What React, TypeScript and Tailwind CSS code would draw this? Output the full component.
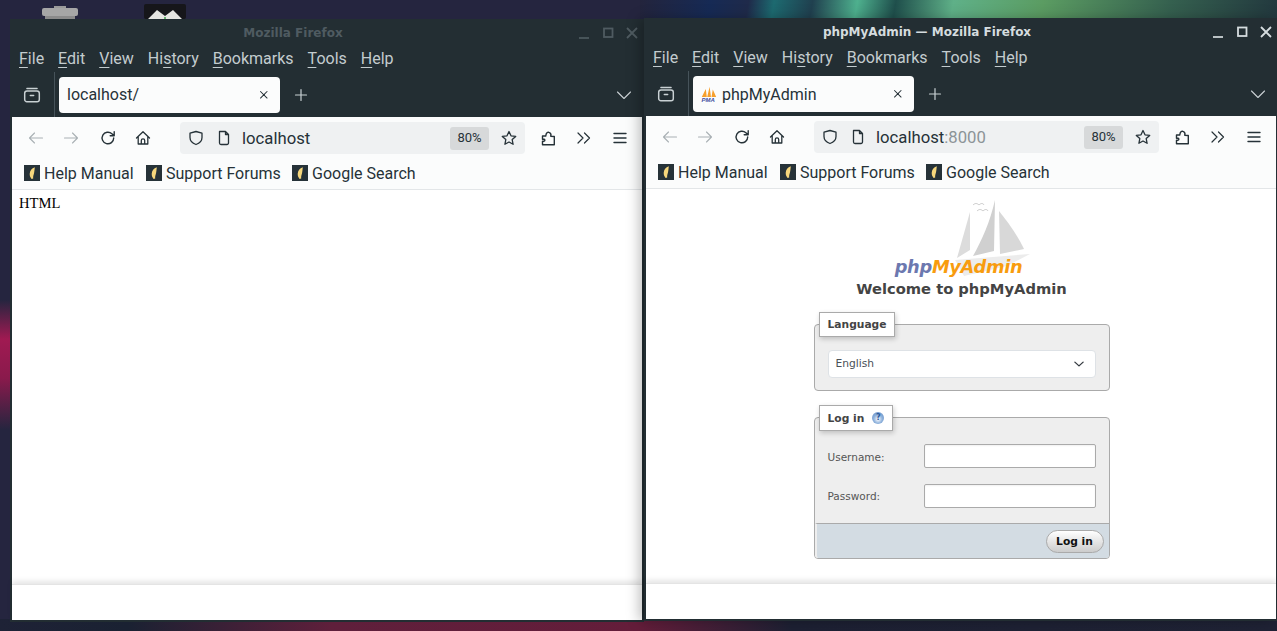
import React from 'react';

const MENU = ['File', 'Edit', 'View', 'History', 'Bookmarks', 'Tools', 'Help'];
const BOOKMARKS = [
  { label: 'Help Manual', w: 'w-[122px]' },
  { label: 'Support Forums', w: 'w-[146px]' },
  { label: 'Google Search', w: 'w-auto' },
];

const Ico: React.FC<{ className?: string; size?: number; children: React.ReactNode }> = ({ className, size = 16, children }) => (
  <svg width={size} height={size} viewBox="0 0 16 16" fill="none" stroke="currentColor" strokeWidth="1.3" strokeLinecap="round" strokeLinejoin="round" className={className}>
    {children}
  </svg>
);

const Feather = () => (
  <svg width="16" height="16" viewBox="0 0 16 16" className="shrink-0">
    <rect width="16" height="16" fill="#263238" />
    <path d="M10.800 2.300C7.800 3.300 5.700 6 5.700 9c0 2 .7 3.500 1.900 5l1.600-.5c-.1-1.500 0-2.500.5-4 .6-1.700.8-4.300 1.100-7.200z" fill="#f6d77c" />
  </svg>
);

const PmaFavicon = () => (
  <svg width="16" height="16" viewBox="0 0 16 16" className="shrink-0 mr-[5px]">
    <path d="M.8 11 4.800 3 5.800 11zM6.200 11 8.600.8 10 11zM10.500 11l1.300-7.500 3.400 7.500z" fill="#f7a02c" />
    <text x="0.500" y="16" fontSize="6" fontWeight="700" fontStyle="italic" fill="#3f51a0" fontFamily="'Liberation Sans', sans-serif">PMA</text>
  </svg>
);

const MenuLabel: React.FC<{ text: string }> = ({ text }) => {
  const i = text === 'History' ? 2 : 0;
  return (
    <span>
      {text.slice(0, i)}
      <span className="underline underline-offset-[3px] decoration-1">{text[i]}</span>
      {text.slice(i + 1)}
    </span>
  );
};

const FirefoxWindow: React.FC<{
  title: string;
  active: boolean;
  tab: string;
  favicon?: boolean;
  host: string;
  port?: string;
  className: string;
  children: React.ReactNode;
}> = ({ title, active, tab, favicon, host, port, className, children }) => (
  <div className={`absolute w-[634px] h-[603px] flex flex-col bg-[#232e33] ${className}`}>
    <div className={`h-[27px] flex items-center relative shrink-0 ${active ? 'text-[#d5dcdf]' : 'text-[#4f5b61]'}`}>
      <div className="flex-1 text-center pr-[68px] text-[12px] font-bold font-['DejaVu_Sans',sans-serif]">{title}</div>
      <div className="absolute right-[4px] top-[6px] flex gap-[8px]">
        <Ico><path d="M3 13h10" strokeWidth="1.700" strokeLinecap="butt" /></Ico>
        <Ico><rect x="4" y="3.500" width="8.500" height="8.500" strokeWidth="1.800" strokeLinejoin="miter" /></Ico>
        <Ico><path d="m3 3 10 10M13 3 3 13" strokeWidth="1.800" strokeLinecap="butt" /></Ico>
      </div>
    </div>

    <div className="h-[26px] shrink-0 flex items-center pl-[9px] gap-[14px] text-[16px] text-[#c3cccf] font-['Roboto',sans-serif]">
      {MENU.map(m => <MenuLabel key={m} text={m} />)}
    </div>

    <div className="h-[45px] shrink-0 flex text-[#c9d1d4]">
      <div className="w-[45px] flex items-center justify-center border-r border-[#46535a]">
        <Ico size={18}>
          <rect x="1.500" y="4.500" width="13" height="9.500" rx="2" />
          <path d="M3.500 2.200h9M6.500 8.500h3" />
        </Ico>
      </div>
      <div className="ml-[4px] mt-[5px] w-[221px] h-[36px] rounded-[4px] bg-[#fbfcfc] flex items-center px-[8px] text-[#263238] text-[16px] font-['Roboto',sans-serif]">
        {favicon && <PmaFavicon />}
        <span className={`flex-1 ${favicon ? 'pt-[2px]' : ''}`}>{tab}</span>
        <Ico size={14} className="mr-[1px]"><path d="m4 4 7.500 7.500M11.500 4 4 11.500" strokeWidth="1.200" /></Ico>
      </div>
      <div className="ml-[13px] flex items-center">
        <Ico size={16}><path d="M8 2.500v11M2.500 8h11" strokeWidth="1.200" /></Ico>
      </div>
      <div className="ml-auto mr-[12px] flex items-center">
        <Ico size={16}><path d="m1.500 5 6.500 6.500L14.500 5" strokeWidth="1.100" /></Ico>
      </div>
    </div>

    <div className="mx-[2px] flex-1 min-h-0 flex flex-col bg-white">
      <div className="h-[40px] pt-[2px] shrink-0 bg-[#fbfcfc] flex items-center pl-[16px] text-[#263238]">
        <Ico className="text-[#a9b0b4]"><path d="M14.500 8h-13M6.500 3l-5 5 5 5" strokeWidth="1.100" /></Ico>
        <Ico className="text-[#a9b0b4] ml-[19px]"><path d="M1.500 8h13M9.500 3l5 5-5 5" strokeWidth="1.100" /></Ico>
        <Ico className="ml-[21px]"><path d="M13.700 8a5.800 5.800 0 1 1-1.800-4.200L14 5.800M14.200 1.800v4h-4" strokeWidth="1.400" /></Ico>
        <Ico className="ml-[19px]"><path d="M1.500 8 8 1.800 14.500 8M3.200 6.500V14h9.600V6.500M6.300 14v-3.500a1.700 1.700 0 0 1 3.400 0V14" /></Ico>
        <div className="ml-[29px] h-[32px] w-[345px] rounded-[4px] bg-[#eff1f2] flex items-center pl-[8px] text-[16.700px] font-['Roboto',sans-serif]">
          <Ico><path d="M8 1.500 2 3.200v4.300c0 3.400 2.500 5.800 6 7 3.500-1.200 6-3.600 6-7V3.200z" /></Ico>
          <Ico className="ml-[12px]"><path d="M3.500 1.500h6l3 3V13a1.500 1.500 0 0 1-1.500 1.500H5A1.500 1.500 0 0 1 3.500 13zM9.500 1.500v3h3" /></Ico>
          <span className="ml-[10px] flex-1 pt-[2px]">{host}{port && <span className="text-[#8c9497]">{port}</span>}</span>
          <span className="w-[39px] h-[23px] rounded-[3px] bg-[#d7d9da] flex items-center justify-center text-[13px]">80%</span>
          <Ico className="ml-[12px] mr-[8px]"><path d="m8 1.500 2 4.300 4.700.6-3.500 3.200.9 4.700L8 12l-4.100 2.300.9-4.700-3.500-3.200L6 5.800z" /></Ico>
        </div>
        <Ico className="ml-[15px]"><path d="M2.500 14.800h11.800V6.500l-3.500-.3c.4-1.500-.3-3.300-1.800-3.800C7.500 1.800 6.200 3 6 4.800L5.700 6H2.500v3.200h1.600c1 .2 1 1.700 0 2H2.500z" strokeWidth="1.400" /></Ico>
        <Ico className="ml-[20px]"><path d="m2 3 5 5-5 5M8.500 3l5 5-5 5" strokeWidth="1.200" /></Ico>
        <Ico className="ml-[20px]"><path d="M2 3.500h12M2 8h12M2 12.500h12" strokeWidth="1.400" /></Ico>
      </div>

      <div className="h-[33px] shrink-0 bg-[#fbfcfc] border-b border-[#e3e6e8] flex items-center pl-[12px] text-[16px] text-[#263238] font-['Roboto',sans-serif]">
        {BOOKMARKS.map(b => (
          <div key={b.label} className={`flex items-center gap-[4px] ${b.w}`}>
            <Feather />
            <span className="whitespace-nowrap pt-[2px]">{b.label}</span>
          </div>
        ))}
      </div>

      <div className="flex-1 min-h-0 bg-white">{children}</div>
      <div className="h-[36px] shrink-0 bg-white border-t border-[#e4e4e4] shadow-[0_-3px_5px_rgba(0,0,0,0.1)]" />
    </div>
    <div className="h-[2px] shrink-0" />
  </div>
);

const Ship = () => (
  <svg width="240" height="90" viewBox="0 0 240 90" className="absolute left-0 top-0">
    <path d="M128 18 115 64 128 56z" fill="#dcdcdc" />
    <path d="M153 6C148 28 140 46 131 62L152 57z" fill="#d0d0d0" />
    <path d="M157 17 158 60 182 55C176 42 166 28 157 17z" fill="#d8d8d8" />
    <path d="M113 66 188 60 165 72 122 82z" fill="#ececec" />
    <path d="M131 11c2-2 4-2 6 0 2-2 4-2 5 0M135 17c2-2 4-2 6 0 2-2 4-2 5 0" fill="none" stroke="#bdbdbd" strokeWidth="0.800" />
  </svg>
);

const fieldCls = 'w-[172px] h-[24px] rounded-[2px] border border-[#aaaaaa] bg-white shadow-[inset_0_1px_2px_rgba(0,0,0,0.06)]';

const PmaLogin = () => (
  <div className="flex flex-col items-center pl-[1px] font-['DejaVu_Sans',sans-serif] text-[#444444]">
    <div className="relative w-[240px] h-[90px] mt-[5px] -mb-[4px] flex items-end justify-center">
      <Ship />
      <div className="relative mr-[6px] mb-[5px] text-[17.800px] italic font-bold leading-[24px] tracking-[-0.3px]">
        <span className="text-[#6c78af]">php</span><span className="text-[#f89c0e]">MyAdmin</span>
      </div>
    </div>
    <h1 className="text-[14.700px] font-bold leading-[18px] text-[#444444]">Welcome to phpMyAdmin</h1>

    <div className="relative w-[296px] h-[67px] mt-[26px] rounded-[4px] border border-[#aaaaaa] bg-[#eeeeee] px-[13px] pt-[25px]">
      <div className="absolute left-[4px] -top-[13px] w-[76px] h-[25px] pt-[2px] bg-white border border-[#aaaaaa] shadow-[1px_2px_5px_rgba(0,0,0,0.2)] flex items-center pl-[8px] text-[10.700px] font-bold text-[#444444]">Language</div>
      <div className="h-[28px] rounded-[4px] border border-[#dee2e6] bg-white flex items-center pl-[7px] pr-[10px] text-[10.700px] text-[#495057]">
        <span className="flex-1">English</span>
        <Ico size={12} className="text-[#343a40]"><path d="m2.500 5.500 5.500 5 5.500-5" strokeWidth="1.800" /></Ico>
      </div>
    </div>

    <div className="relative w-[296px] h-[142px] mt-[26px] rounded-[4px] border border-[#aaaaaa] bg-[#eeeeee] flex flex-col">
      <div className="absolute left-[4px] -top-[13px] w-[74px] h-[26px] bg-white border border-[#aaaaaa] shadow-[1px_2px_5px_rgba(0,0,0,0.2)] flex items-center pl-[8px] gap-[8px] text-[10.700px] font-bold text-[#444444]">
        <span className="pt-[2px]">Log in</span>
        <span className="w-[12px] h-[12px] rounded-full bg-[radial-gradient(circle_at_50%_60%,#ffffff_0%,#8fb2dc_45%,#5b86c2_100%)] flex items-center justify-center text-[8px] leading-none text-[#2d5a99]">?</span>
      </div>
      <div className="flex-1 px-[13px] pt-[26px] flex flex-col gap-[16px] text-[10.500px] text-[#555555]">
        <label className="flex items-center justify-between"><span className="pt-[3px]">Username:</span><div className={fieldCls} /></label>
        <label className="flex items-center justify-between"><span className="pt-[2px]">Password:</span><div className={fieldCls} /></label>
      </div>
      <div className="h-[35px] rounded-b-[3px] border-t border-[#aaaaaa] bg-[#d3dce3] border-l-[2px] border-l-[#eeeeee] flex items-center justify-end pr-[5px]">
        <div className="w-[58px] h-[23px] pt-[2px] rounded-full border border-[#aaaaaa] bg-[linear-gradient(#ffffff,#cccccc)] flex items-center justify-center text-[10.700px] font-bold text-[#111111]">Log in</div>
      </div>
    </div>
  </div>
);

export default function App() {
  return (
    <div className="relative w-[1277px] h-[631px] overflow-hidden bg-[#25253f]">
      {/* wallpaper bits that show round the windows */}
      <div className="absolute right-0 top-0 w-[637px] h-[20px] bg-[linear-gradient(100deg,#23243c_0%,#162a55_11%,#1f2a4a_17%,#1d6a70_21%,#20404f_27%,#4eb08e_34%,#1f4f4c_40%,#5fb088_49%,#5b9c62_63%,#35604f_83%,#22383e_100%)]" />
      <div className="absolute left-0 top-[300px] w-[10px] h-[130px] bg-[linear-gradient(#25253f,#a01a52_30%,#8a1a4c_60%,#25253f)]" />
      <div className="absolute left-0 bottom-0 w-[1277px] h-[12px] bg-[linear-gradient(90deg,#1e2236_0%,#1a2132_10%,#5f1f3b_26%,#641d3a_50%,#1d2033_62%,#1f2235_100%)]" />

      <svg width="36" height="13" viewBox="0 0 36 13" className="absolute left-[42px] top-[6px]">
        <rect x="12" width="12" height="3" fill="#9a9a9a" />
        <rect y="2" width="36" height="8" rx="2" fill="#a6a6a6" />
        <rect x="3" y="10" width="30" height="3" fill="#8b8b8b" />
      </svg>
      <svg width="42" height="15" viewBox="0 0 42 15" className="absolute left-[144px] top-[4px]">
        <rect width="42" height="15" rx="2" fill="#16161a" />
        <path d="M4 15 13 6l8 6 8-6 9 9z" fill="#e6e6e2" />
        <circle cx="21" cy="14" r="1" fill="#3fa34d" />
      </svg>

      <FirefoxWindow title="Mozilla Firefox" active={false} tab="localhost/" host="localhost" className="left-[10px] top-[19px]">
        <div className="pl-[7px] pt-[4px] text-[14.600px] leading-[18px] text-black font-['Liberation_Serif',serif]">HTML</div>
      </FirefoxWindow>

      <FirefoxWindow title="phpMyAdmin — Mozilla Firefox" active tab="phpMyAdmin" favicon host="localhost" port=":8000" className="left-[644px] top-[18px] shadow-[-5px_0_12px_rgba(0,0,0,0.25)]">
        <PmaLogin />
      </FirefoxWindow>
    </div>
  );
}
